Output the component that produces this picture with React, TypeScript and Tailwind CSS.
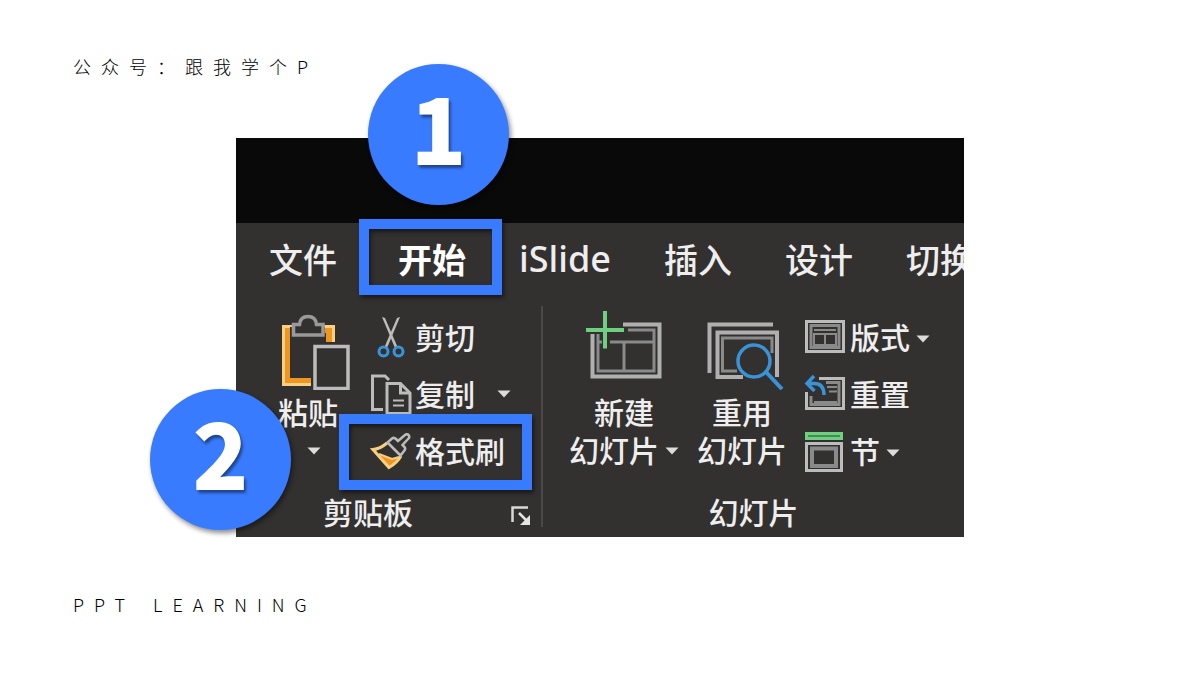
import React from 'react';

interface CommandProps {
  icon: React.ReactNode;
  label: string;
  arrow?: boolean;
  wide?: boolean;
}

const LIGHT = '#bcbcbc';
const GRAY = '#8a8a8a';
const BLUE = '#3a93d6';
const GREEN = '#6fcf80';
const PANEL = '#333130';

const TABS = ['文件', '开始', 'iSlide', '插入', '设计', '切换'];

const Arrow: React.FC = () => (
  <svg width="14" height="8" viewBox="0 0 14 8" className="shrink-0" aria-hidden="true">
    <path d="M0.5 0.5H13.5L7 7.5Z" fill="#dcdcdc" />
  </svg>
);

const PasteIcon = () => (
  <svg width="72" height="80" viewBox="0 0 72 80" fill="none" aria-hidden="true">
    <path d="M4 15H57V76H4Z" fill="#f6d083" />
    <path d="M7 18H54V73H7Z" fill="#ee9620" />
    <path d="M12 23H48V68H12Z" fill={PANEL} />
    <path d="M12 17H47V26H12Z" fill={PANEL} />
    <path d="M15.500 25V14.500H21.500C22 9 25 6.500 30 6.500C35 6.500 38 9 38.500 14.500H45V25Z" fill={PANEL} stroke="#999" strokeWidth="3.500" />
    <path d="M33 32H72V80H33Z" fill={PANEL} />
    <path d="M37 36.500H70V78.500H37Z" stroke={LIGHT} strokeWidth="3.500" />
  </svg>
);

const CutIcon = () => (
  <svg width="41" height="40" viewBox="0 0 41 40" fill="none" overflow="visible" aria-hidden="true">
    <path d="M12 -2L15 -1L27.500 28L25 29Z" fill={LIGHT} />
    <path d="M30 -2L27 -1L14.500 28L17 29Z" fill={LIGHT} />
    <circle cx="13.500" cy="32.500" r="4.500" stroke={BLUE} strokeWidth="3" />
    <circle cx="28.500" cy="32.500" r="4.500" stroke={BLUE} strokeWidth="3" />
  </svg>
);

const CopyIcon = () => (
  <svg width="41" height="40" viewBox="0 0 41 40" fill="none" overflow="visible" aria-hidden="true">
    <path d="M13 33.500H2.500V0H15L19 4" stroke={LIGHT} strokeWidth="3" />
    <path d="M17 7.500H30.500L40 17V37.500H17Z" stroke={LIGHT} strokeWidth="3" />
    <path d="M30.500 7.500V17H40" stroke={LIGHT} strokeWidth="3" />
    <path d="M23 24.500H34M23 29.500H34" stroke={LIGHT} strokeWidth="2" />
  </svg>
);

const BrushIcon = () => (
  <svg width="41" height="40" viewBox="0 0 41 40" fill="none" aria-hidden="true">
    <path d="M10 22L22 26L29 24Q25 31 19 34Z" fill="#ee9620" />
    <path d="M9 21L22 26L29 24" stroke="#f6cf80" strokeWidth="2" />
    <path d="M17 10Q10 16 3 16.500L19 34.500Q27 30 31 23" stroke="#f6cf80" strokeWidth="3" />
    <path
      d="M17.500 9.500L22 5.500Q24 4 26 6L28 8L35 2Q37 0.500 38.500 2Q40 4 38.500 5.500L32.500 12L34.500 14Q36 16 34 18L30.500 22.500Z"
      fill={PANEL}
      stroke={LIGHT}
      strokeWidth="2.500"
    />
  </svg>
);

const NewSlideIcon = () => (
  <svg width="76" height="80" viewBox="0 0 76 80" fill="none" aria-hidden="true">
    <path d="M37 14.500H73.500V66.500H6.500V24" stroke="#b0b0b0" strokeWidth="4" />
    <path d="M42 20H68V61H12V24" stroke={GRAY} strokeWidth="3" />
    <path d="M24 32H68M38 32V61M12 32H16" stroke={GRAY} strokeWidth="3" />
    <path d="M19 1V38.500M0 20H38" stroke={GREEN} strokeWidth="4" />
  </svg>
);

const ReuseSlideIcon = () => (
  <svg width="90" height="80" viewBox="0 0 90 80" fill="none" aria-hidden="true">
    <path d="M76 14.500H12.500V63" stroke="#b0b0b0" strokeWidth="4" />
    <path d="M46 67H20.500V22.500H80V67" stroke="#b0b0b0" strokeWidth="4" />
    <path d="M40 61H25.500V28H75V43" stroke={GRAY} strokeWidth="3" />
    <circle cx="57" cy="51" r="16" stroke={BLUE} strokeWidth="3.500" />
    <path d="M69 62L85 79" stroke={BLUE} strokeWidth="4" />
  </svg>
);

const LayoutIcon = () => (
  <svg width="41" height="40" viewBox="0 0 41 40" fill="none" aria-hidden="true">
    <path d="M1.500 2.500H38.500V32.500H1.500Z" stroke={LIGHT} strokeWidth="3" />
    <path d="M6 6.500H34V28.500H6Z" stroke={GRAY} strokeWidth="3" />
    <path d="M9 11H31" stroke={GRAY} strokeWidth="2" />
    <path d="M9 15H31V26H9ZM20 15V26" stroke={GRAY} strokeWidth="2" />
  </svg>
);

const ResetIcon = () => (
  <svg width="41" height="40" viewBox="0 0 41 40" fill="none" overflow="visible" aria-hidden="true">
    <path d="M14 2.500H38.500V32.500H1.500V16" stroke={LIGHT} strokeWidth="3" />
    <path d="M21 6.500H34V28.500H6V20" stroke={GRAY} strokeWidth="3" />
    <path d="M22 11H32M24 15.500H32M9 26H32" stroke={GRAY} strokeWidth="2" />
    <path d="M9 0L2 7.500L9.500 15M2 7.500H9C16 7.500 19 12 19 19" stroke={BLUE} strokeWidth="3.500" />
  </svg>
);

const SectionIcon = () => (
  <svg width="41" height="40" viewBox="0 0 41 40" fill="none" overflow="visible" aria-hidden="true">
    <path d="M0 -1H38V7H0Z" fill={GREEN} />
    <path d="M3 3H35" stroke="#4a8a55" strokeWidth="2" />
    <path d="M1.500 10.500H36.500V37.500H1.500Z" stroke={LIGHT} strokeWidth="3" />
    <path d="M7 15.500H31V33H7Z" stroke={GRAY} strokeWidth="4" />
  </svg>
);

const LauncherIcon = () => (
  <svg width="20" height="20" viewBox="0 0 20 20" fill="none" aria-hidden="true">
    <path d="M1.500 16V1.500H17" stroke="#d8d8d8" strokeWidth="2.500" />
    <path d="M8 7L15 14" stroke="#e4e4e4" strokeWidth="2.500" />
    <path d="M19 9V19H9Z" fill="#e4e4e4" />
  </svg>
);

const Command: React.FC<CommandProps> = ({ icon, label, arrow, wide }) => (
  <button className="flex h-[57px] items-center gap-1 whitespace-nowrap">
    {icon}
    <span className="pb-1.5">{label}</span>
    {arrow && (
      <span className={wide ? 'pb-1 pl-[18px]' : 'pl-0.5'}>
        <Arrow />
      </span>
    )}
  </button>
);

const Badge: React.FC<{ children: React.ReactNode; className: string }> = ({ children, className }) => (
  <div
    className={`absolute flex size-[141px] items-center justify-center rounded-full bg-[#397bff] pb-5 text-[92px] leading-none font-black text-white shadow-[2px_3px_5px_rgba(0,0,0,0.45)] text-shadow-[2px_3px_3px_rgba(0,0,0,0.45)] ${className}`}
  >
    {children}
  </div>
);

const Ribbon: React.FC = () => (
  <div className="overflow-hidden bg-[#333130] text-[30px] leading-[38px] font-medium text-[#eeeeee]">
    <div className="h-[85px] bg-[#090909]" />
    <nav className="flex h-[83px] items-start gap-[53px] pl-[33px]">
      {TABS.map(tab => (
        <button
          key={tab}
          className={`h-[71px] shrink-0 text-[34px] ${tab === '开始' ? 'pl-2 font-bold text-white' : ''} ${tab === 'iSlide' ? "font-['Noto_Sans'] text-[36px]" : ''}`}
        >
          {tab}
        </button>
      ))}
    </nav>

    <div className="flex">
      {/* Clipboard */}
      <section className="w-[305px] shrink-0 pt-1">
        <div className="flex h-[171px] gap-5 pl-[42px]">
          <button className="flex flex-col items-start">
            <PasteIcon />
            <span className="mt-0.5">粘贴</span>
            <span className="flex h-[38px] items-center self-center pt-1">
              <Arrow />
            </span>
          </button>
          <div className="flex flex-col">
            <Command icon={<CutIcon />} label="剪切" />
            <Command icon={<CopyIcon />} label="复制" arrow wide />
            <Command icon={<BrushIcon />} label="格式刷" />
          </div>
        </div>
        <div className="flex h-14 items-center justify-between pt-1 pr-2.5 pl-[87px]">
          <span>剪贴板</span>
          <button className="pt-2.5" aria-label="剪贴板">
            <LauncherIcon />
          </button>
        </div>
      </section>

      <div className="mb-2.5 w-0.5 bg-[#4b4947]" />

      {/* Slides */}
      <section className="min-w-0 flex-1 pt-1">
        <div className="flex h-[171px] gap-[18px] pl-[26px]">
          <button className="flex shrink-0 flex-col items-center">
            <NewSlideIcon />
            <span className="mt-0.5">新建</span>
            <span className="flex items-center gap-1.5">
              幻灯片
              <span className="pt-1">
                <Arrow />
              </span>
            </span>
          </button>
          <button className="flex shrink-0 flex-col items-center">
            <ReuseSlideIcon />
            <span className="mt-0.5">重用</span>
            <span>幻灯片</span>
          </button>
          <div className="flex flex-col">
            <Command icon={<LayoutIcon />} label="版式" arrow />
            <Command icon={<ResetIcon />} label="重置" />
            <Command icon={<SectionIcon />} label="节" arrow />
          </div>
        </div>
        <div className="flex h-14 items-center justify-center pt-1">幻灯片</div>
      </section>
    </div>
  </div>
);

const App: React.FC = () => {
  return (
    <div className="min-h-screen bg-white font-['Noto_Sans_CJK_SC',sans-serif] text-black">
      <header className="px-[73px] pt-[53px] text-lg leading-[27px] font-light tracking-[10px]">
        公众号：跟我学个P
      </header>

      <main className="relative mx-auto mt-[58px] w-full max-w-[728px]">
        <Ribbon />

        {/* Step highlights */}
        <div className="pointer-events-none absolute top-[81px] left-[123px] h-[76px] w-[143px] border-10 border-[#397bff] drop-shadow-[2px_3px_2px_rgba(0,0,0,0.5)]" />
        <div className="pointer-events-none absolute top-[276px] left-[103px] h-[76px] w-[193px] border-10 border-[#397bff] drop-shadow-[2px_3px_2px_rgba(0,0,0,0.5)]" />
        <Badge className="-top-[74px] left-[132px]">1</Badge>
        <Badge className="top-[251px] -left-[86px]">2</Badge>
      </main>

      <footer className="mt-[54px] flex gap-[18px] px-[73px] text-lg leading-[27px] font-light tracking-[10px]">
        <span>PPT</span>
        <span>LEARNING</span>
      </footer>
    </div>
  );
};

export default App;
